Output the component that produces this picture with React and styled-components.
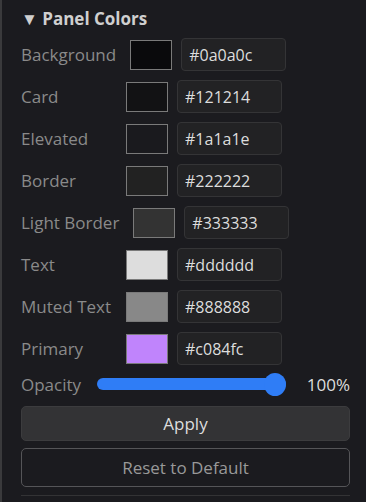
import React, { useState } from 'react'
import styled, { createGlobalStyle } from 'styled-components'

const GlobalStyle = createGlobalStyle`
    html, body {
        margin: 0;
        padding: 0;
        background: #1b1b1f;
    }
    body {
        font-family: "Open Sans", "Noto Sans", sans-serif;
        width: 366px;
        height: 502px;
        overflow: hidden;
    }
`

let panelBg = '#1b1b1f'
let fieldBg = '#222224'
let fieldBorder = '#343436'
let muted = '#8a8a8a'
let light = '#dddddd'
let blue = '#2f7df6'

const colors = [
    { label: 'Background', value: '#0a0a0c' },
    { label: 'Card', value: '#121214' },
    { label: 'Elevated', value: '#1a1a1e' },
    { label: 'Border', value: '#222222' },
    { label: 'Light Border', value: '#333333' },
    { label: 'Text', value: '#dddddd' },
    { label: 'Muted Text', value: '#888888' },
    { label: 'Primary', value: '#c084fc' }
]

export default function App() {
    const [opacity, setOpacity] = useState(100)

    return (
        <Panel>
            <GlobalStyle />
            <Title>▼ Panel Colors</Title>

            <Rows>
                {colors.map(c => (
                    <Row key={c.label}>
                        <Label>{c.label}</Label>
                        <Swatch $color={c.value} />
                        <HexInput defaultValue={c.value} spellCheck={false} />
                    </Row>
                ))}

                <SliderRow>
                    <SliderLabel>Opacity</SliderLabel>
                    <Range
                        type='range'
                        min='0'
                        max='100'
                        value={opacity}
                        onChange={e => setOpacity(e.target.value)}
                    />
                    <Value>{opacity}%</Value>
                </SliderRow>
            </Rows>

            <Buttons>
                <ApplyButton>Apply</ApplyButton>
                <ResetButton>Reset to Default</ResetButton>
            </Buttons>
            <Divider />
        </Panel>
    )
}

const Panel = styled.div`
    box-sizing: border-box;
    width: 366px;
    height: 502px;
    background: ${panelBg};
    border-left: 2px solid #3a3a3c;
    padding: 8px 16px 0 19px;
    display: flex;
    flex-direction: column;
`

const Title = styled.div`
    color: #cfcfcf;
    font-size: 17px;
    font-weight: 700;
    line-height: 22px;
`

const Rows = styled.div`
    display: flex;
    flex-direction: column;
    gap: 9px;
    margin-top: 8px;
`

const Row = styled.div`
    display: flex;
    align-items: center;
    height: 33px;
`

const Label = styled.span`
    min-width: 91px;
    margin-right: 14px;
    color: ${muted};
    font-size: 17px;
    white-space: nowrap;
`

const Swatch = styled.div`
    box-sizing: border-box;
    width: 42px;
    height: 30px;
    border: 1px solid #7a7a7a;
    background: ${props => props.$color};
    margin-right: 9px;
`

const HexInput = styled.input`
    box-sizing: border-box;
    width: 105px;
    height: 33px;
    padding: 0 7px;
    background: ${fieldBg};
    border: 1px solid ${fieldBorder};
    border-radius: 4px;
    color: ${light};
    font-family: inherit;
    font-size: 16px;
    outline: none;
`

const SliderRow = styled.div`
    display: flex;
    align-items: center;
    height: 26px;
    margin-top: -3px;
`

const SliderLabel = styled.span`
    color: ${muted};
    font-size: 17px;
    margin-right: 16px;
`

const Range = styled.input`
    -webkit-appearance: none;
    appearance: none;
    width: 192px;
    height: 23px;
    margin: 0;
    background: transparent;

    &::-webkit-slider-runnable-track {
        height: 12px;
        border-radius: 6px;
        background: ${blue};
    }

    &::-webkit-slider-thumb {
        -webkit-appearance: none;
        width: 22px;
        height: 23px;
        margin-top: -5.5px;
        border-radius: 50%;
        background: ${blue};
        border: none;
    }
`

const Value = styled.span`
    margin-left: 21px;
    color: ${light};
    font-size: 17px;
    white-space: nowrap;
`

const Buttons = styled.div`
    display: flex;
    flex-direction: column;
    gap: 7px;
    margin-top: 9px;
`

const ApplyButton = styled.button`
    box-sizing: border-box;
    height: 35px;
    background: #333335;
    border: 1px solid #3c3c3e;
    border-radius: 5px;
    color: ${light};
    font-family: inherit;
    font-size: 17px;
    cursor: pointer;
`

const ResetButton = styled.button`
    box-sizing: border-box;
    height: 39px;
    background: transparent;
    border: 1px solid #555558;
    border-radius: 5px;
    color: #999999;
    font-family: inherit;
    font-size: 17px;
    cursor: pointer;
`

const Divider = styled.div`
    margin-top: 8px;
    height: 1px;
    background: #333335;
`
